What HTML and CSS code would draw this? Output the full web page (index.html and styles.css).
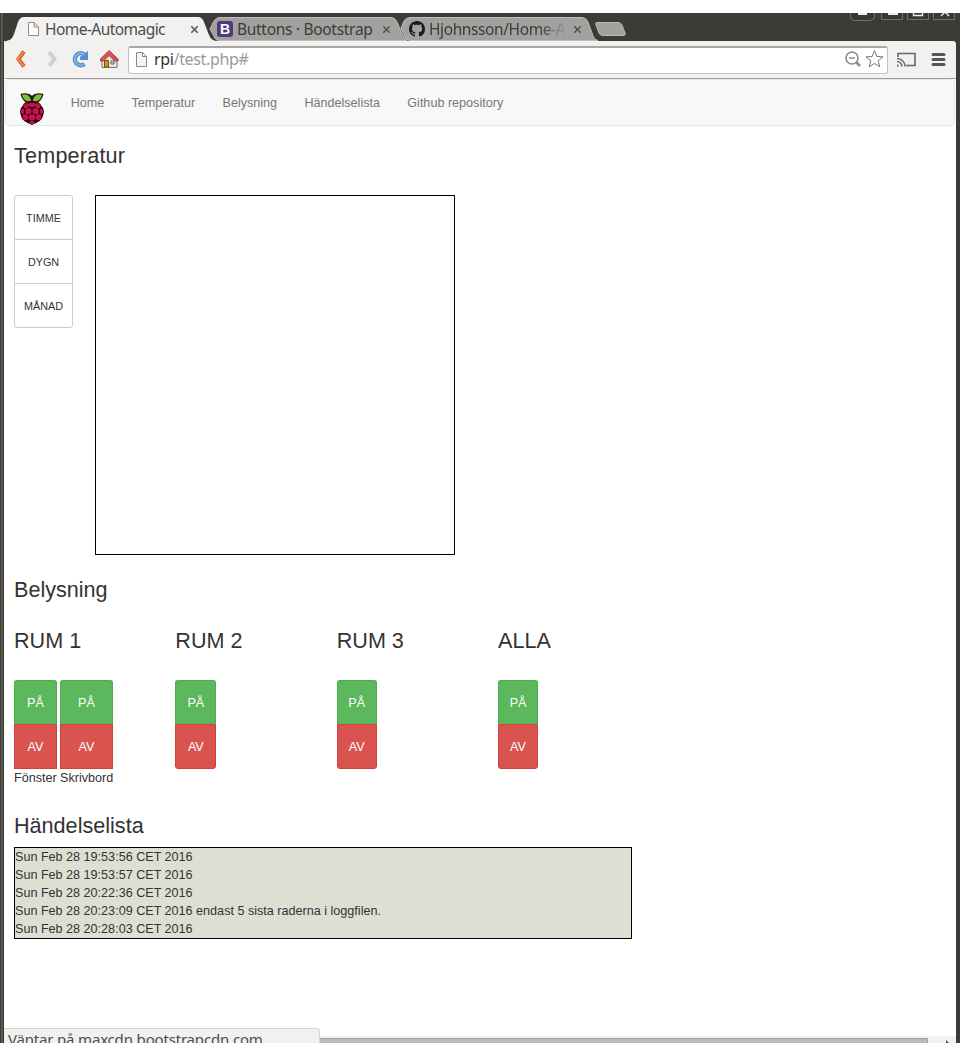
FILE: index.html
```html
<!DOCTYPE html>
<html lang="sv">
<head>
<meta charset="utf-8">
<title>Home-Automagic</title>
<link rel="stylesheet" href="styles.css">
</head>
<body>
<div class="window">
  <header class="tabstrip">
    <div class="tab tab-active">
      <svg class="tab-shape" width="214" height="28" viewBox="0 0 214 28"><path d="M0 28C6 28 8 26 10 21L14 9Q16 4 20 4H194Q198 4 200 9L205 22Q207 28 214 28Z" fill="#f2f1f0"/></svg>
      <svg class="tab-icon" width="16" height="16" viewBox="0 0 16 16"><path d="M3.500 1.500H9L13.500 6V14.500H3.500ZM9 1.500V6H13.500" fill="#fafafa" stroke="#8c8c8c"/></svg>
      <span class="tab-title title-home">Home-Automagic</span>
      <svg class="tab-close" width="9" height="9" viewBox="0 0 9 9"><path d="M1.300 1.300L7.700 7.700M7.700 1.300L1.300 7.700" stroke="#555" stroke-width="1.600"/></svg>
    </div>
    <div class="tab tab-bootstrap">
      <svg class="tab-shape" width="198" height="28" viewBox="0 0 198 28"><path d="M1 16L5 8Q7 4.500 11 4.500H182Q186 4.500 188 9L194 23Q196 27.500 198 27.500H11Q6 27.500 5 23Z" fill="#a3a19f" stroke="#c0bebb"/></svg>
      <svg class="tab-icon" width="16" height="16" viewBox="0 0 16 16"><rect width="16" height="16" rx="3" fill="#4f397a"/><text x="8" y="13" text-anchor="middle" class="badge-letter">B</text></svg>
      <span class="tab-title title-buttons">Buttons · Bootstrap</span>
      <svg class="tab-close" width="9" height="9" viewBox="0 0 9 9"><path d="M1.300 1.300L7.700 7.700M7.700 1.300L1.300 7.700" stroke="#4b4b48" stroke-width="1.300"/></svg>
    </div>
    <div class="tab tab-github">
      <svg class="tab-shape" width="198" height="28" viewBox="0 0 198 28"><path d="M1 15L4 8Q6 4.500 10 4.500H182Q186 4.500 188 9L193 23Q195 27.500 198 27.500H10Q6 27.500 5 24Z" fill="#a3a19f" stroke="#c0bebb"/></svg>
      <svg class="tab-icon" width="16" height="16" viewBox="0 0 16 16"><path fill="#1b1b1b" fill-rule="evenodd" d="M8 0C3.580 0 0 3.580 0 8c0 3.540 2.290 6.530 5.470 7.590.4.070.55-.17.55-.38 0-.19-.01-.82-.01-1.490-2.010.37-2.530-.49-2.690-.94-.09-.23-.48-.94-.82-1.130-.28-.15-.68-.52-.01-.53.63-.01 1.080.58 1.230.82.72 1.210 1.870.87 2.330.66.07-.52.28-.87.51-1.070-1.780-.2-3.640-.89-3.640-3.950 0-.87.31-1.590.82-2.150-.08-.2-.36-1.020.08-2.120 0 0 .67-.21 2.200.82.640-.18 1.320-.27 2-.27s1.360.09 2 .27c1.530-1.040 2.200-.82 2.200-.82.440 1.100.160 1.920.080 2.120.510.560.820 1.270.820 2.150 0 3.070-1.870 3.750-3.650 3.950.290.250.540.730.540 1.480 0 1.070-.010 1.930-.010 2.200 0 .210.150.460.550.380A8.010 8.010 0 0 0 16 8c0-4.420-3.580-8-8-8Z"/></svg>
      <span class="tab-title title-github">Hjohnsson/Home-Au</span>
      <svg class="tab-close" width="9" height="9" viewBox="0 0 9 9"><path d="M1.300 1.300L7.700 7.700M7.700 1.300L1.300 7.700" stroke="#4b4b48" stroke-width="1.300"/></svg>
    </div>
    <svg class="new-tab" width="33" height="28" viewBox="0 0 33 28"><path d="M3 9.500H24Q27 9.500 28 12L31 20Q32 22.500 29 22.500H9Q6 22.500 5 20L2 12Q1 9.500 3 9.500Z" fill="#a3a19f" stroke="#bdbbb8"/></svg>
    <svg class="window-controls" width="106" height="8" viewBox="0 0 106 8"><g fill="#393833" stroke="#74726c"><path d="M.500 0V4Q1 7.500 4 7.500H20Q24 7 24.500 4V0M31.500 0V6.500H52.500V0M57.500 0V6.500H78.500V0M83.500 0V6.500H104.500V0"/></g><path d="M8 1H17M38 1H48" stroke="#eee" stroke-width="2"/><path d="M63.500 0V2.500H72.500V0M91 3L95 -1L99 3" fill="none" stroke="#eee" stroke-width="1.400"/></svg>
  </header>

  <div class="toolbar">
    <svg class="nav-icons" width="120" height="37" viewBox="0 0 120 37">
      <path d="M19 10.500L13.500 18L19 25.500" fill="none" stroke="#d95a23" stroke-width="4"/>
      <path d="M18.500 11L13 18L18.500 25" fill="none" stroke="#f5915c" stroke-width="1.500"/>
      <path d="M44 11L49.500 18L44 25" fill="none" stroke="#d3d1cf" stroke-width="4"/>
      <path d="M79.500 13.500A6 6 0 1 0 79.500 23" fill="none" stroke="#568fcb" stroke-width="4.400"/>
      <path d="M75 18V16L83 10V19H75Z" fill="#568fcb"/>
      <path d="M79.500 13.500A6 6 0 1 0 79.500 23" fill="none" stroke="#80b4e4" stroke-width="2"/>
      <path d="M97 18V26.500H112V18L104 11Z" fill="#e7e6e1" stroke="#777"/>
      <path d="M99.500 19.500H103.500V26H99.500Z" fill="#d99516" stroke="#76540e"/>
      <path d="M106 20H109V23H106Z" fill="#c3ccd6" stroke="#666"/>
      <path d="M95.500 18L104 9.500L113 18V20H110L104 14.500L98.500 20H95.500Z" fill="#d35454" stroke="#a93e3e"/>
    </svg>
    <div class="address">
      <svg width="16" height="18" viewBox="0 0 16 18"><path d="M1.500 2.500H7.500L11.500 6.500V16.500H1.500ZM7.500 2.500V6.500H11.500" fill="#f4f4f4" stroke="#888"/></svg>
      <span class="url"><span class="host">rpi</span>/test.php#</span>
      <svg class="address-actions" width="42" height="20" viewBox="0 0 42 20"><circle cx="8" cy="9" r="6" fill="none" stroke="#8c8c8c" stroke-width="1.600"/><path d="M5 9H11" stroke="#8c8c8c" stroke-width="1.500"/><path d="M12.500 13.500L16 17" stroke="#8c8c8c" stroke-width="2.500"/><path d="M30.500 1.500L32.800 7.500L39 7.800L34.200 11.800L35.800 17.800L30.500 14.500L25.200 17.800L26.800 11.800L22 7.800L28.200 7.500Z" fill="#fff" stroke="#777" stroke-linejoin="round"/></svg>
    </div>
    <svg class="toolbar-actions" width="52" height="20" viewBox="0 0 52 20"><path d="M2 8V4.500H19V16.500H10" fill="none" stroke="#666" stroke-width="1.600"/><path d="M1 9.500A8 8 0 0 1 9 17.500M1 12.500A5 5 0 0 1 6 17.500" fill="none" stroke="#666" stroke-width="1.400"/><path d="M1 15.500A2 2 0 0 1 3 17.500H1Z" fill="#666"/><path d="M37 5.500H48M37 10.500H48M37 15.500H48" stroke="#555" stroke-width="3" stroke-linecap="round"/></svg>
  </div>

  <div class="page">
    <nav class="navbar">
      <svg class="brand" width="24" height="32" viewBox="0 0 24 32">
        <path d="M11.500 11C7 11 2 8 .500 1C5 -.500 10 .500 12 3C14 .500 19 -.500 23.500 1C22 8 17 11 12.500 11Z" fill="#17240b"/>
        <path d="M11 9C6 9 3 6 2 2C7 .500 11 3 11 9ZM13 9C18 9 21 6 22 2C17 .500 13 3 13 9Z" fill="#83bd38"/>
        <path d="M12 8C16 8 20 9 21.500 13C24 15 24.500 20 23 22.500C22 28 17 29.500 12 32C7 29.500 2 28 1 22.500C-.500 20 0 15 2.500 13C4 9 8 8 12 8Z" fill="#160610"/>
        <g fill="#cc0f45"><ellipse cx="12" cy="11.800" rx="3.500" ry="2.200"/><ellipse cx="6.400" cy="12.800" rx="3" ry="2.300" transform="rotate(-35 6.400 12.800)"/><ellipse cx="17.600" cy="12.800" rx="3" ry="2.300" transform="rotate(35 17.600 12.800)"/><circle cx="8.400" cy="18.200" r="3.200"/><circle cx="15.600" cy="18.200" r="3.200"/><ellipse cx="2.600" cy="18.500" rx="1.500" ry="3"/><ellipse cx="21.400" cy="18.500" rx="1.500" ry="3"/><circle cx="12" cy="24.500" r="3.200"/><ellipse cx="5.600" cy="24.200" rx="2.800" ry="3.200" transform="rotate(-25 5.600 24.200)"/><ellipse cx="18.400" cy="24.200" rx="2.800" ry="3.200" transform="rotate(25 18.400 24.200)"/><ellipse cx="12" cy="29.600" rx="3" ry="1.300"/></g>
      </svg>
      <a>Home</a><a>Temperatur</a><a>Belysning</a><a>Händelselista</a><a>Github repository</a>
    </nav>
    <main class="content">
      <h3 class="temperature-heading">Temperatur</h3>
      <section class="temperature">
        <div class="periods"><button>TIMME</button><button>DYGN</button><button>MÅNAD</button></div>
        <div class="chart"></div>
      </section>
      <h3>Belysning</h3>
      <section class="rooms">
        <div class="room"><h3>RUM 1</h3>
          <div class="switches">
            <div class="switch square window-lamp"><button class="on">PÅ</button><button class="off">AV</button><span>Fönster</span></div>
            <div class="switch square desk-lamp"><button class="on">PÅ</button><button class="off">AV</button><span>Skrivbord</span></div>
          </div>
        </div>
        <div class="room"><h3>RUM 2</h3><div class="switches"><div class="switch room-two"><button class="on">PÅ</button><button class="off">AV</button></div></div></div>
        <div class="room"><h3>RUM 3</h3><div class="switches"><div class="switch"><button class="on">PÅ</button><button class="off">AV</button></div></div></div>
        <div class="room"><h3>ALLA</h3><div class="switches"><div class="switch"><button class="on">PÅ</button><button class="off">AV</button></div></div></div>
      </section>
      <h3 class="log-heading">Händelselista</h3>
      <div class="log">
        <div>Sun Feb 28 19:53:56 CET 2016</div>
        <div>Sun Feb 28 19:53:57 CET 2016</div>
        <div>Sun Feb 28 20:22:36 CET 2016</div>
        <div>Sun Feb 28 20:23:09 CET 2016 endast 5 sista raderna i loggfilen.</div>
        <div>Sun Feb 28 20:28:03 CET 2016</div>
      </div>
    </main>
    <div class="scrollbar"><div class="thumb"></div><svg width="5" height="8" viewBox="0 0 5 8"><path d="M0 0L4 4L0 8Z" fill="#505050"/></svg></div>
    <div class="status">Väntar på maxcdn.bootstrapcdn.com...</div>
  </div>
</div>
</body>
</html>
```

FILE: styles.css
```css
* { box-sizing: border-box; }
body { margin: 0; padding: 13px 0; background: #fff; color: #333; font: 12.6px/18px "Liberation Sans", Arial, sans-serif; }
.window { height: 1030px; padding: 0 4px 0 5px; overflow: hidden; background: linear-gradient(90deg, #3c3b37 0 1px, #5c5a54 1px 3px, #32312d 3px 4px, #fff 4px 5px, #3c3b37 5px); }
.tabstrip { position: relative; height: 28px; margin-left: -1px; padding-left: 1px; display: flex; background: #3c3b37; font-family: "Noto Sans", sans-serif; }
.tab { position: relative; height: 28px; display: flex; align-items: center; flex: none; padding-top: 4px; }
.tab > * { position: relative; flex: none; }
.tab .tab-shape { position: absolute; left: 0; top: 0; }
.tab-active { width: 204px; padding-left: 20px; z-index: 2; }
.tab-active .tab-shape { left: -1px; }
.tab-bootstrap { width: 191px; padding-left: 8px; }
.tab-github { width: 196px; padding-left: 9px; }
.tab-icon { margin-right: 4px; }
.tab-title { font-size: 15.5px; line-height: 22px; color: #4c4c4c; white-space: nowrap; }
.title-home { width: 121px; margin-right: 24px; letter-spacing: -0.55px; }
.title-buttons { width: 137px; margin-right: 8px; color: #3c3b37; letter-spacing: -0.3px; }
.title-github { width: 138px; margin-right: 6px; color: #3c3b37; letter-spacing: -0.4px; -webkit-mask-image: linear-gradient(90deg, #000 80%, transparent); mask-image: linear-gradient(90deg, #000 80%, transparent); }
.badge-letter { font: bold 14px "Liberation Sans", sans-serif; fill: #fff; }
.new-tab { flex: none; margin-left: -2px; }
.window-controls { position: absolute; right: 0; top: 0; }
.toolbar { display: flex; align-items: center; height: 37px; margin-left: -1px; padding-left: 1px; background: #f2f1f0; border-radius: 3px 3px 0 0; }
.nav-icons { flex: none; margin-right: 3px; }
.address { display: flex; align-items: center; width: 760px; height: 28px; padding: 0 1px 0 6px; border: 1px solid #c5c3c1; border-top: 2px solid #a9a7a5; border-radius: 3px; background: #fff; }
.address > svg { position: relative; top: -1px; }
.url { position: relative; top: -1px; margin-left: 3px; font: 16px/22px "Noto Sans", sans-serif; color: #999; letter-spacing: -0.35px; }
.host { color: #333; }
.address-actions { margin-left: auto; }
.toolbar-actions { margin: 0 0 2px 8px; flex: none; }
.page { position: relative; height: 965px; background: #fff; border-top: 1px solid #9d9b99; }
.navbar { display: flex; height: 47px; align-items: center; margin-right: 1px; border: 1px solid #e7e7e7; border-radius: 4px; background: #f8f8f8; color: #777; padding-left: 14px; }
.brand { align-self: flex-end; margin-right: 13px; }
.navbar a { padding: 0 13.65px; }
.content { padding: 18px 9px 0; }
h3 { margin: 0; font-size: 21.6px; line-height: 24px; font-weight: normal; }
.temperature-heading { letter-spacing: 0.2px; }
.temperature { display: flex; gap: 22px; margin: 27px 0 23px; }
.periods { width: 59px; height: 133px; display: flex; flex-direction: column; border: 1px solid #ccc; border-radius: 3px; }
.periods button { flex: 1; padding: 0; border: 0; border-bottom: 1px solid #ccc; background: none; color: #333; font: 10.8px "Liberation Sans", sans-serif; }
.periods button:last-child { border-bottom: 0; }
.chart { width: 360px; height: 360px; border: 1px solid #000; }
.rooms { display: grid; grid-template-columns: repeat(4, 161.35px); height: 158px; margin-top: 27px; }
.switches { display: flex; gap: 3px; margin-top: 27px; }
.switch { width: 40px; display: flex; flex-direction: column; }
.window-lamp { width: 43px; }
.desk-lamp { width: 53px; }
.room-two { width: 41px; }
.switch span { white-space: nowrap; }
.switch button { height: 44px; padding: 0; border: 1px solid #4cae4c; border-bottom: 0; border-radius: 3px 3px 0 0; background: #5cb85c; color: #fff; font: 12.6px "Liberation Sans", sans-serif; }
.switch .off { height: 45px; border: 1px solid #d43f3a; border-radius: 0 0 3px 3px; background: #d9534f; }
.square .off { border-radius: 0; }
.log-heading { margin-top: 27px; }
.log { width: 618px; margin-top: 9px; border: 1px solid #000; background: #dddfd3; }
.scrollbar { position: absolute; left: 0; right: 0; bottom: 0; display: flex; height: 7px; padding-top: 2px; background: #f1f1f1; }
.thumb { width: 923px; height: 20px; margin-right: 18px; border: 1px solid #a0a0a0; background: #bcbcbc; }
.scrollbar svg { margin-top: 2px; }
.status { position: absolute; left: -1px; bottom: 0; width: 316px; height: 15px; padding-left: 4px; border: 1px solid #d6d4d2; border-left: 0; border-bottom: 0; border-radius: 0 4px 0 0; background: #f2f1f0; color: #4c4c4c; font: 15px/20px "Noto Sans", sans-serif; letter-spacing: -0.18px; overflow: hidden; white-space: nowrap; }
```
